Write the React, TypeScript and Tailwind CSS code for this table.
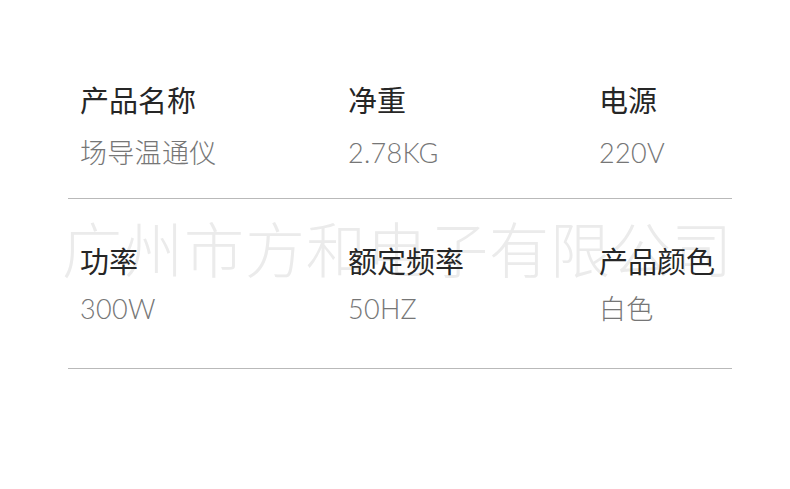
const rows = [
  [
    { label: "产品名称", value: "场导温通仪" },
    { label: "净重", value: "2.78KG" },
    { label: "电源", value: "220V" },
  ],
  [
    { label: "功率", value: "300W" },
    { label: "额定频率", value: "50HZ" },
    { label: "产品颜色", value: "白色" },
  ],
];

const font = "font-['Lato','Noto_Sans_CJK_SC',sans-serif]";

function Cell({ label, value }: { label: string; value: string }) {
  return (
    <div className="flex flex-col">
      <div className="text-[29px] leading-none text-[#262626]">{label}</div>
      <div className="text-[27px] leading-none font-light text-[#767676] mt-[var(--gap)] tracking-[0.3px]">
        {value}
      </div>
    </div>
  );
}

export default function App() {
  return (
    <div className={`relative w-[790px] h-[489px] bg-white overflow-hidden ${font}`}>
      {/* watermark */}
      <div className="absolute left-[62px] top-[220px] text-[60px] leading-none font-light text-[#ebebeb] whitespace-nowrap tracking-[1px] pointer-events-none select-none">
        广州市方和电子有限公司
      </div>

      <div className="relative mx-[68px] w-[664px]">
        <div className="pt-[86px] pb-[32px] pl-[12px] grid grid-cols-[268px_251px_1fr] [--gap:24px]">
          {rows[0].map((c) => (
            <Cell key={c.label} {...c} />
          ))}
        </div>
        <div className="border-t border-[#b9b9b9]" />
        <div className="pt-[48px] pb-[46px] pl-[12px] grid grid-cols-[268px_251px_1fr] [--gap:19px]">
          {rows[1].map((c) => (
            <Cell key={c.label} {...c} />
          ))}
        </div>
        <div className="border-t border-[#b9b9b9]" />
      </div>
    </div>
  );
}
